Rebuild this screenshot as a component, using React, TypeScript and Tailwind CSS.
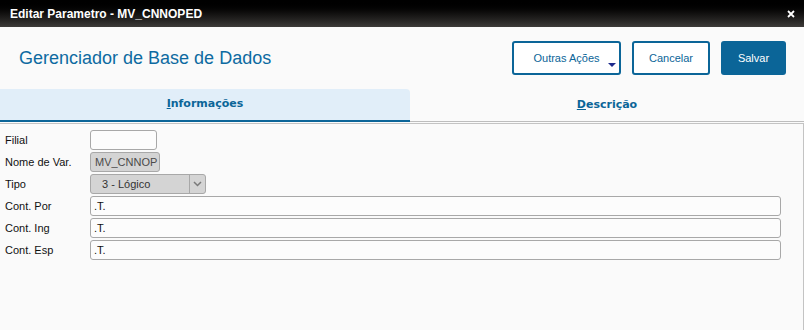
import React from 'react';

const Field: React.FC<{ label: string; children: React.ReactNode }> = ({ label, children }) => (
  <div className="flex items-center h-[20px]">
    <div className="w-[90px] pl-[5px] text-[11px] text-[#111]">{label}</div>
    {children}
  </div>
);

const App: React.FC = () => {
  return (
    <div className="w-[804px] h-[330px] overflow-hidden bg-[#fafafa] font-['Liberation_Sans',Arial,sans-serif]">
      {/* title bar */}
      <div className="h-[27px] flex items-center justify-between pl-[10px] pr-[9px] bg-gradient-to-b from-[#000000] to-[#3d3b39] text-white">
        <span className="text-[12px] font-bold">Editar Parametro - MV_CNNOPED</span>
        <svg width="8" height="8" viewBox="0 0 8 8" className="mt-[1px]">
          <path d="M1 1L7 7M7 1L1 7" stroke="white" strokeWidth="1.8" />
        </svg>
      </div>

      {/* header */}
      <div className="h-[62px] flex items-center justify-between pl-[19px] pr-[18px]">
        <h1 className="text-[18px] text-[#0d6aa1]">Gerenciador de Base de Dados</h1>
        <div className="flex gap-[11px]">
          <button className="relative w-[109px] h-[34px] rounded-[3px] border-2 border-[#0b6598] bg-white text-[11px] text-[#0b6598]">
            Outras Ações
            <span className="absolute right-[3px] bottom-[6px] w-0 h-0 border-l-[4px] border-r-[4px] border-t-[4px] border-l-transparent border-r-transparent border-t-[#1c2a8c]" />
          </button>
          <button className="w-[78px] h-[34px] rounded-[3px] border-2 border-[#0b6598] bg-white text-[11px] text-[#0b6598]">
            Cancelar
          </button>
          <button className="w-[65px] h-[34px] rounded-[3px] bg-[#0b6598] text-[11px] text-white">
            Salvar
          </button>
        </div>
      </div>

      {/* tabs */}
      <div className="flex h-[33px] font-['DejaVu_Sans',Verdana,sans-serif] text-[11px] font-bold text-[#0b6598]">
        <div className="w-[410px] flex items-center justify-center bg-[#e1eef9] rounded-tr-[4px] border-b-2 border-[#0b6598]">
          <span>
            <span className="underline">I</span>nformações
          </span>
        </div>
        <div className="flex-1 flex items-center justify-center border-b border-[#bdbdbd]">
          <span>
            <span className="underline">D</span>escrição
          </span>
        </div>
      </div>

      {/* content */}
      <div className="mt-[1px] h-[220px] border-t border-r border-[#c3c3c3] pt-[6px] flex flex-col gap-[2px]">
        <Field label="Filial">
          <div className="w-[67px] h-[20px] rounded-[3px] border border-[#a8a8a8] bg-[#fcfcfc]" />
        </Field>
        <Field label="Nome de Var.">
          <div className="w-[70px] h-[20px] rounded-[3px] border border-[#a8a8a8] bg-[#d4d4d4] whitespace-nowrap pl-[4px] text-[11px] leading-[18px] text-[#4a4a4a]">
            MV_CNNOP
          </div>
        </Field>
        <Field label="Tipo">
          <div className="w-[116px] h-[20px] rounded-[3px] border border-[#a8a8a8] bg-[#d4d4d4] flex text-[11px] leading-[18px] text-[#333]">
            <div className="flex-1 pl-[11px]">3 - Lógico</div>
            <div className="w-[16px] border-l border-[#a8a8a8] flex items-center justify-center">
              <svg width="9" height="6" viewBox="0 0 9 6">
                <path d="M1 1L4.5 4.5L8 1" stroke="#7a7a7a" strokeWidth="1.5" fill="none" />
              </svg>
            </div>
          </div>
        </Field>
        {['Cont. Por', 'Cont. Ing', 'Cont. Esp'].map((l) => (
          <Field key={l} label={l}>
            <div className="w-[691px] h-[20px] rounded-[3px] border border-[#a8a8a8] bg-[#fcfcfc] pl-[3px] text-[11px] leading-[18px] text-[#111]">
              .T.
            </div>
          </Field>
        ))}
      </div>
    </div>
  );
};

export default App;
